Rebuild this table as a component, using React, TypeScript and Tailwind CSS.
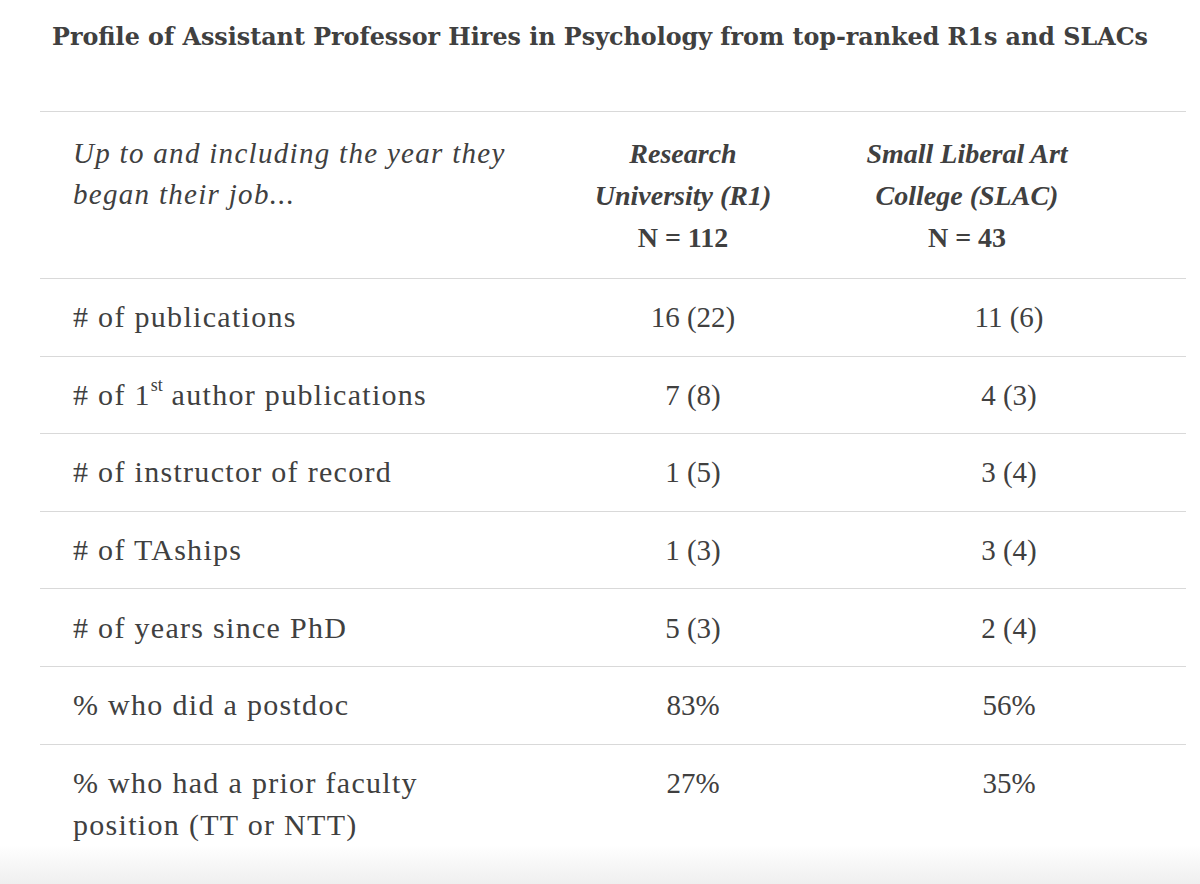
import React from "react";

const serif = { fontFamily: '"Liberation Serif", "Times New Roman", serif' };
const titleFont = { fontFamily: '"DejaVu Serif", "Liberation Serif", serif' };

type Row = { label: React.ReactNode; r1: string; slac: string };

const rows: Row[] = [
  { label: "# of publications", r1: "16 (22)", slac: "11 (6)" },
  {
    label: (
      <>
        # of 1<sup className="text-[18px] relative top-[-3px] align-super leading-none tracking-normal">st</sup> author publications
      </>
    ),
    r1: "7 (8)",
    slac: "4 (3)",
  },
  { label: "# of instructor of record", r1: "1 (5)", slac: "3 (4)" },
  { label: "# of TAships", r1: "1 (3)", slac: "3 (4)" },
  { label: "# of years since PhD", r1: "5 (3)", slac: "2 (4)" },
  { label: "% who did a postdoc", r1: "83%", slac: "56%" },
  {
    label: (
      <>
        % who had a prior faculty
        <br />
        position (TT or NTT)
      </>
    ),
    r1: "27%",
    slac: "35%",
  },
];

export default function App() {
  return (
    <div
      className="w-[1200px] h-[884px] overflow-hidden text-[#404040] bg-[linear-gradient(to_bottom,#ffffff_845px,#efefef_884px)]"
      style={serif}
    >
      <h1
        className="pt-[19px] h-[111px] text-center text-[23.8px] font-bold leading-[36px]"
        style={titleFont}
      >
        Profile of Assistant Professor Hires in Psychology from top-ranked R1s and SLACs
      </h1>

      <div className="ml-[40px] w-[1146px]">
        <div className="grid grid-cols-[495px_316px_316px] border-t border-[#d9d9d9] pt-[21px] pb-[20px] h-[167px]">
          <div className="pl-[33px] italic text-[29px] leading-[41px] tracking-[1.3px]">
            Up to and including the year they
            <br />
            began their job...
          </div>
          <div className="pr-[20px] text-center font-bold italic text-[28px] leading-[42px]">
            Research
            <br />
            University (R1)
            <br />
            <span className="not-italic">N = 112</span>
          </div>
          <div className="pr-[84px] text-center font-bold italic text-[28px] leading-[42px]">
            Small Liberal Art
            <br />
            College (SLAC)
            <br />
            <span className="not-italic">N = 43</span>
          </div>
        </div>

        {rows.map((row, i) => (
          <div
            key={i}
            className="grid grid-cols-[495px_316px_316px] border-t border-[#d9d9d9] py-[17.3px]"
          >
            <div className="pl-[33px] text-[30px] leading-[42px] tracking-[1.3px]">{row.label}</div>
            <div className="text-center text-[29px] leading-[42px]">{row.r1}</div>
            <div className="text-center text-[29px] leading-[42px]">{row.slac}</div>
          </div>
        ))}
      </div>
    </div>
  );
}
